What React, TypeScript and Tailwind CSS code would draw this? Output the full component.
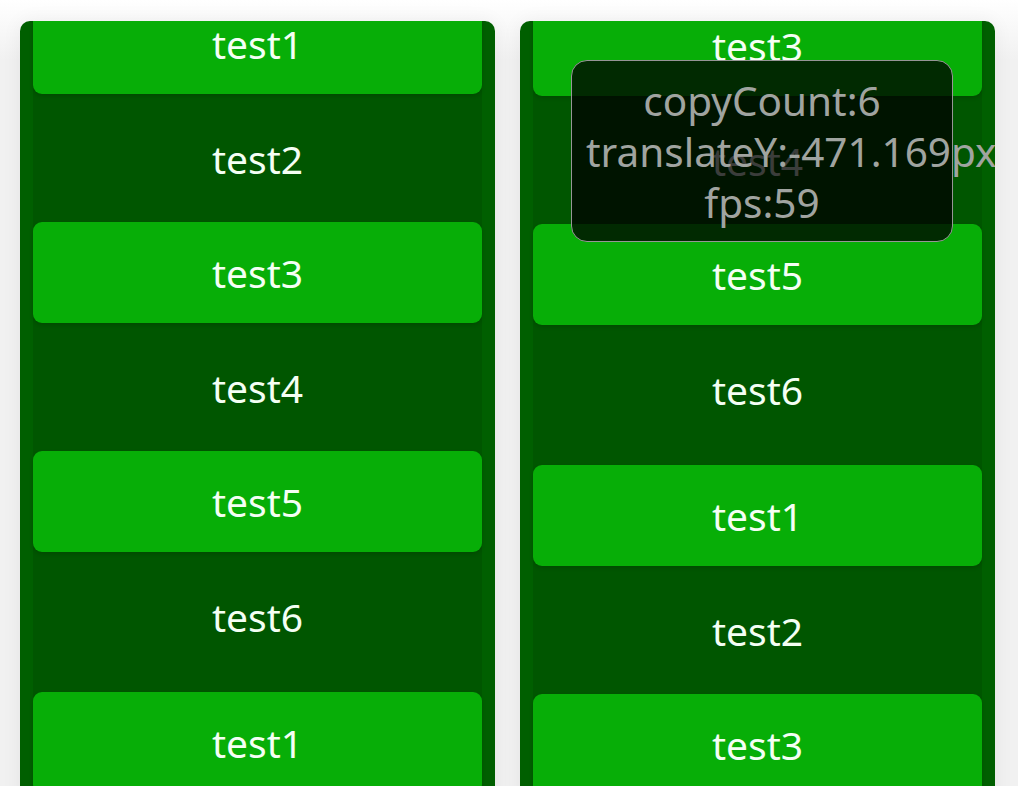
import React from "react";

const names = ["test1", "test2", "test3", "test4", "test5", "test6"];

function Copy() {
    return (
        <div className="flex flex-col gap-[13.5px] pb-[12px]">
            {names.map((n, i) => (
                <div
                    key={n}
                    className={
                        i % 2 === 0
                            ? "h-[101px] flex items-center justify-center rounded-[9px] bg-[#07ae07] text-[#f4fff4] shadow-[0_2px_4px_rgba(0,0,0,0.15)]"
                            : "h-[101px] flex items-center justify-center text-[#f4fff4]"
                    }
                >
                    {n}
                </div>
            ))}
        </div>
    );
}

function ScrollColumn({ shift, children }: { shift: string; children?: React.ReactNode }) {
    return (
        <div className="relative w-[475px] h-[820px] shrink-0 overflow-hidden rounded-[10px] bg-[#005f00] px-[13px] shadow-[0_0_20px_rgba(0,0,0,0.06)]">
            <div className={`flex flex-col gap-[13.5px] bg-[#005600] ${shift}`}>
                <Copy />
                <Copy />
            </div>
            {children}
        </div>
    );
}

export default function App() {
    return (
        <div className="h-screen overflow-hidden bg-[linear-gradient(to_bottom,#ffffff_0px,#f1f1f1_60px,#f1f1f1_100%)] font-['Noto_Sans',sans-serif] text-[39px] leading-none">
            <div className="flex gap-[25px] pl-[20px] pt-[21px]">
                <ScrollColumn shift="-translate-y-[28px]" />
                <ScrollColumn shift="-translate-y-[255px]">
                    {/* debug panel over the list */}
                    <div className="absolute left-[51px] top-[39px] w-[382px] h-[182px] rounded-[16px] border border-[#969696] bg-[rgba(0,0,0,0.76)] px-[14px] py-[14px] text-center text-[40.5px] leading-[51px] text-[#a0a4a0] whitespace-nowrap">
                        <div>copyCount:6</div>
                        <div>translateY:-471.169px</div>
                        <div>fps:59</div>
                    </div>
                </ScrollColumn>
            </div>
        </div>
    );
}
